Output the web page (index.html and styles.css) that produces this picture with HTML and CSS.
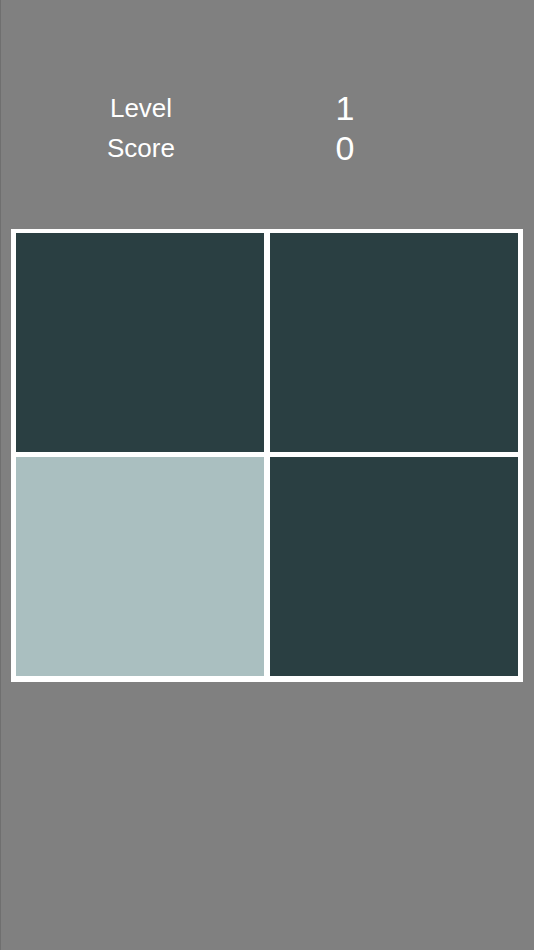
FILE: index.html
```html
<!DOCTYPE html>
<html>
<head>
<meta charset="utf-8">
<link rel="stylesheet" href="styles.css">
</head>
<body>
<div class="screen">
  <div class="stats">
    <div class="label">Level</div><div class="value">1</div>
    <div class="label">Score</div><div class="value">0</div>
  </div>
  <div class="board">
    <div class="tile dark"></div>
    <div class="tile dark"></div>
    <div class="tile light"></div>
    <div class="tile dark"></div>
  </div>
</div>
</body>
</html>
```
FILE: styles.css
```css
html, body {
  margin: 0;
  padding: 0;
  background: #808080;
}
.screen {
  width: 533px;
  height: 950px;
  border-left: 1px solid #6f6f6f;
  background: #808080;
  font-family: "Liberation Sans", Arial, sans-serif;
  color: #ffffff;
  overflow: hidden;
}
.stats {
  display: grid;
  grid-template-columns: 200px 208px;
  padding-top: 88px;
  padding-left: 40px;
}
.label {
  font-size: 26px;
  line-height: 40px;
  height: 40px;
  text-align: center;
}
.value {
  font-size: 34px;
  line-height: 40px;
  height: 40px;
  text-align: center;
}
.board {
  margin-top: 61px;
  margin-left: 10px;
  width: 502px;
  height: 443px;
  background: #ffffff;
  padding: 4px 5px 6px 5px;
  display: grid;
  grid-template-columns: 248px 248px;
  grid-template-rows: 219px 219px;
  column-gap: 6px;
  row-gap: 5px;
}
.tile.dark {
  background: #2a3f42;
}
.tile.light {
  background: #aabfc0;
}
```
